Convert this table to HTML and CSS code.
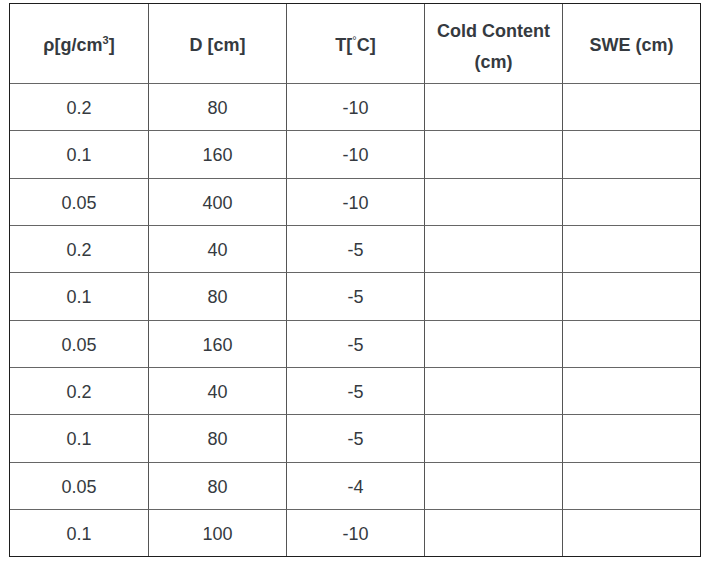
FILE: index.html
```html
<!DOCTYPE html>
<html>
<head>
<meta charset="utf-8">
<link rel="stylesheet" href="styles.css">
</head>
<body>
<table class="grid">
  <colgroup>
    <col class="c1"><col class="c2"><col class="c3"><col class="c4"><col class="c5">
  </colgroup>
  <thead>
    <tr class="head">
      <th>ρ[g/cm<sup>3</sup>]</th>
      <th>D [cm]</th>
      <th>T[<sup class="deg">°</sup>C]</th>
      <th class="two">Cold Content<br>(cm)</th>
      <th>SWE (cm)</th>
    </tr>
  </thead>
  <tbody>
    <tr><td>0.2</td><td>80</td><td>-10</td><td></td><td></td></tr>
    <tr><td>0.1</td><td>160</td><td>-10</td><td></td><td></td></tr>
    <tr><td>0.05</td><td>400</td><td>-10</td><td></td><td></td></tr>
    <tr><td>0.2</td><td>40</td><td>-5</td><td></td><td></td></tr>
    <tr><td>0.1</td><td>80</td><td>-5</td><td></td><td></td></tr>
    <tr><td>0.05</td><td>160</td><td>-5</td><td></td><td></td></tr>
    <tr><td>0.2</td><td>40</td><td>-5</td><td></td><td></td></tr>
    <tr><td>0.1</td><td>80</td><td>-5</td><td></td><td></td></tr>
    <tr><td>0.05</td><td>80</td><td>-4</td><td></td><td></td></tr>
    <tr><td>0.1</td><td>100</td><td>-10</td><td></td><td></td></tr>
  </tbody>
</table>
</body>
</html>
```
FILE: styles.css
```css
html, body {
  margin: 0;
  padding: 0;
  background: #ffffff;
}
body {
  padding: 3px 0 0 9px;
  font-family: "Liberation Sans", Arial, sans-serif;
  color: #353a40;
}
.grid {
  table-layout: fixed;
  width: 692px;
  border-collapse: separate;
  border-spacing: 0;
  border: 1px solid #1e1e1e;
}
.c1 { width: 139px; }
.c2, .c3, .c4 { width: 138px; }
.c5 { width: 137px; }
.grid th, .grid td {
  padding: 3px 0 0 0;
  text-align: center;
  vertical-align: middle;
  border-right: 1px solid #555;
  border-bottom: 1px solid #666;
  box-sizing: border-box;
}
.grid th:last-child, .grid td:last-child { border-right: none; }
.grid tbody tr:last-child td { border-bottom: none; }
.grid th {
  font-size: 18px;
  font-weight: bold;
  line-height: 31px;
  padding-top: 3px;
}
.grid th.two {
  padding-top: 7px;
}
.grid td {
  font-size: 18px;
  line-height: 27px;
}
.head { height: 80px; }
.grid tbody tr { height: 47.33px; }
.grid tbody tr:last-child { height: 46.3px; }
sup {
  font-size: 11px;
  line-height: 0;
  vertical-align: 7px;
}
sup.deg {
  font-size: 11px;
  font-weight: normal;
}
```
